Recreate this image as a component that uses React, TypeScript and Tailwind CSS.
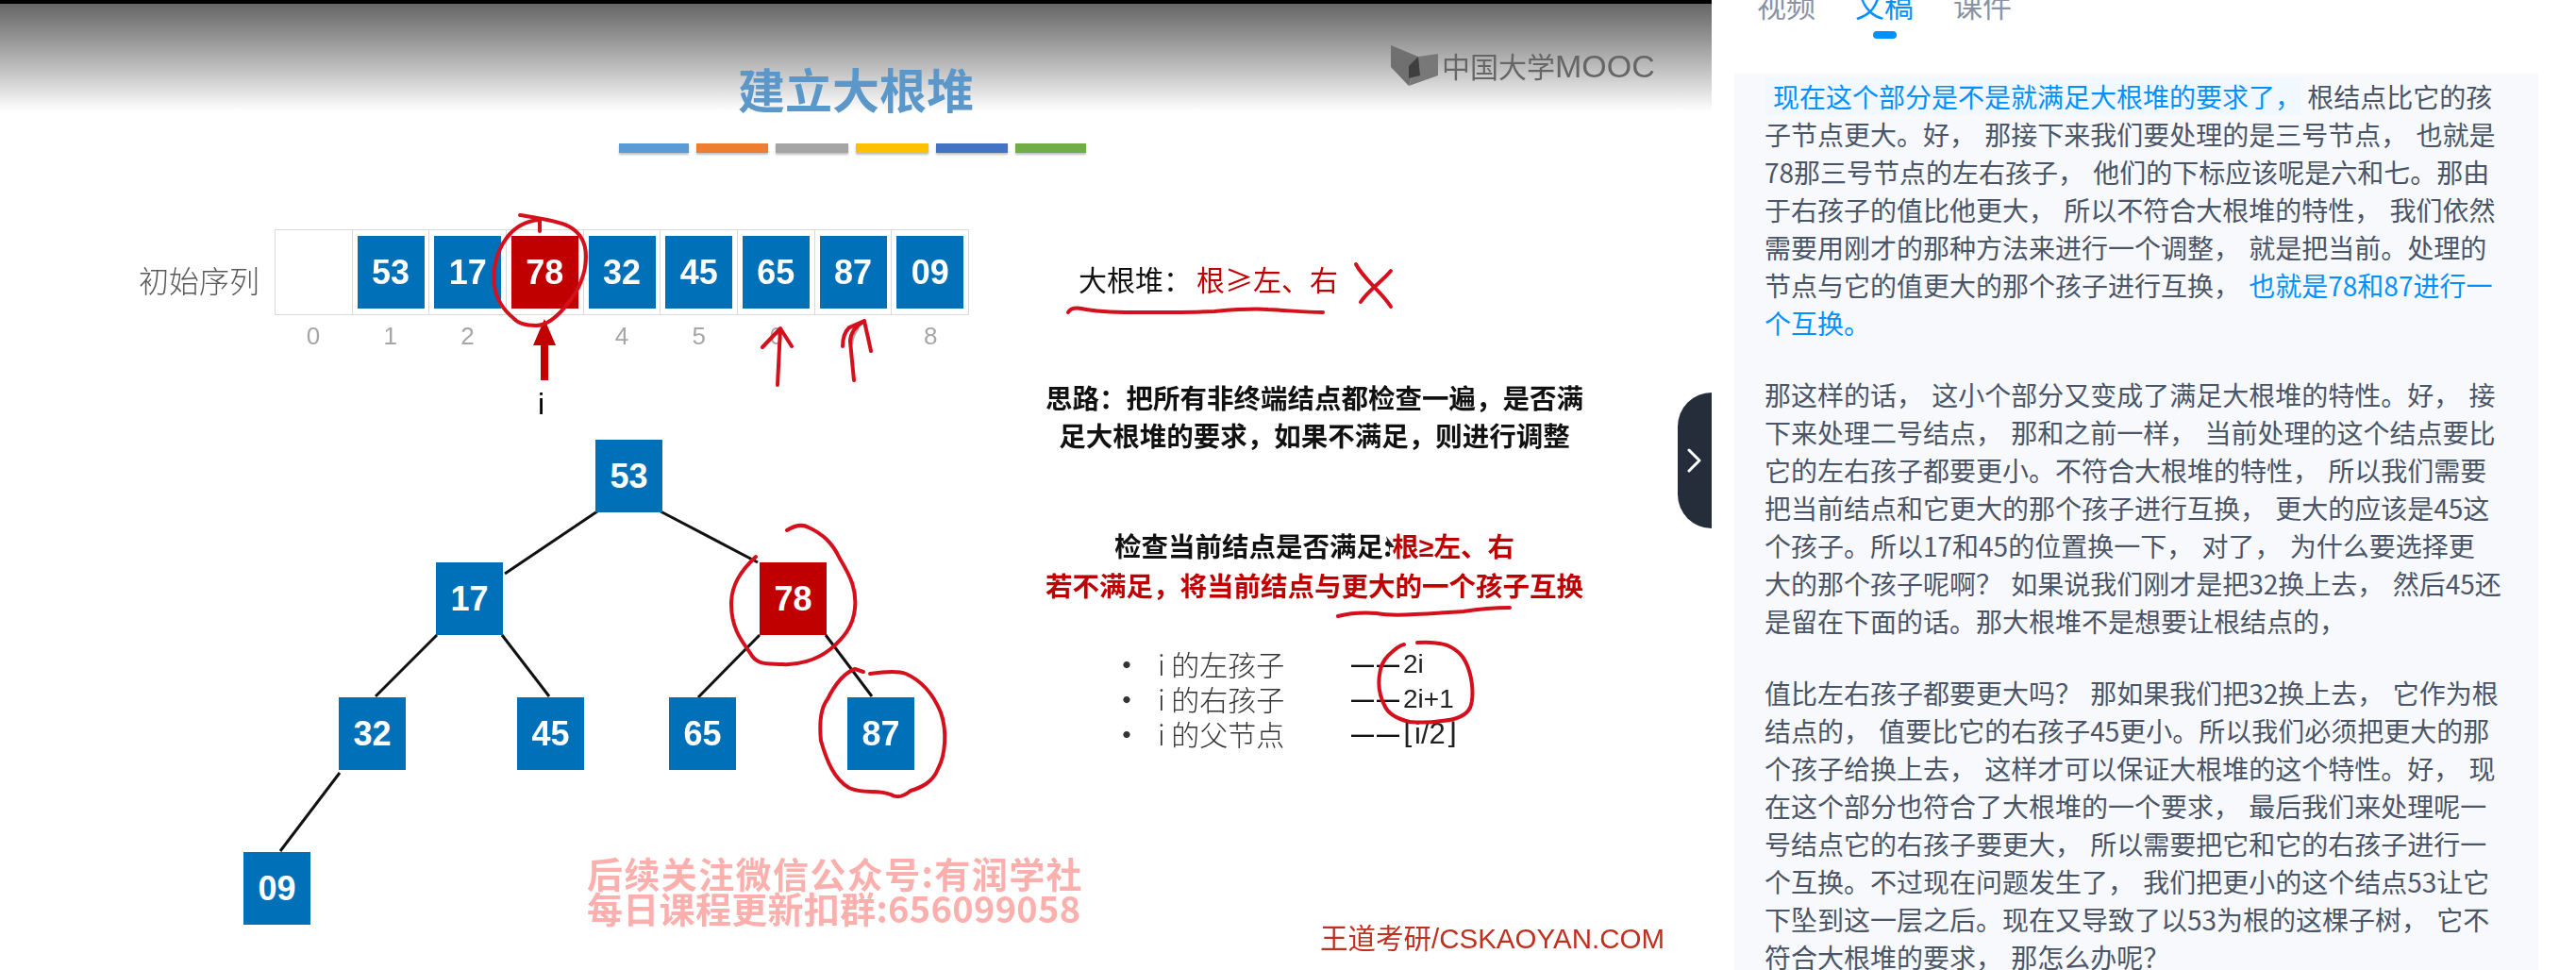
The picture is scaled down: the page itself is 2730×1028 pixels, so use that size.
const CJK = `font-['Noto_Sans_CJK_SC',sans-serif]`;

const F = (s: string) => s.replace(/,/g, "\uFF0C").replace(/\?/g, "\uFF1F").replace(/:/g, "\uFF1A");

function ArrBox({ v, red }: { v: string; red?: boolean }) {
  return (
    <div className="flex-1 border-l border-[#d9d9d9] first:border-l-0 flex items-center justify-center">
      {v ? (
        <div className={`w-[71px] h-[77px] flex items-center justify-center text-white text-[36px] font-bold font-['Liberation_Sans',sans-serif] ${red ? "bg-[#c00000]" : "bg-[#0070b8]"}`}>
          {v}
        </div>
      ) : null}
    </div>
  );
}

const nodes = [
  { v: "53", x: 631, y: 466 },
  { v: "17", x: 462, y: 596 },
  { v: "78", x: 805, y: 596, red: true },
  { v: "32", x: 359, y: 739 },
  { v: "45", x: 548, y: 739 },
  { v: "65", x: 709, y: 739 },
  { v: "87", x: 898, y: 739 },
  { v: "09", x: 258, y: 903 },
];

const edges = [
  [633, 542, 535, 608],
  [700, 542, 803, 596],
  [463, 673, 398, 738],
  [532, 673, 582, 738],
  [805, 673, 740, 739],
  [875, 673, 924, 738],
  [360, 819, 297, 902],
];

const strokes = [
  "M551 228C570 231 592 234 603 240C616 247 621 258 621 272C621 290 613 308 603 320C594 332 582 345 568 345C556 345 548 342 544 337C533 328 526 316 524 303C522 288 525 268 537 252C546 240 558 234 572 233M572 233L572 245",
  "M824 408L827 348M808 368L827 348L839 367",
  "M905 403L901 362C901 352 908 345 916 340M893 367C893 358 895 352 900 347L916 340C918 350 921 362 923 372",
  "M834 562C842 557 850 555 857 559C872 566 882 575 890 592C902 612 908 625 906 645C904 665 893 677 880 688C865 700 845 705 829 704C812 703 802 705 795 692C785 678 775 665 775 640C775 620 785 605 801 590",
  "M922 714C935 712 950 710 960 714C978 722 990 738 997 755C1004 775 1002 800 994 815C988 830 975 835 965 838C958 844 950 846 944 842C930 836 915 842 900 835C884 826 876 806 870 785C868 765 870 750 877 741C885 725 895 713 906 709L915 712",
  "M1132 331C1135 326 1140 326 1146 327C1165 331 1185 331 1201 331C1230 331 1260 331 1287 330C1310 328 1330 327 1344 328C1365 329 1385 331 1402 331",
  "M1437 280C1445 296 1465 310 1474 325M1474 287C1465 298 1450 308 1442 320",
  "M1418 653C1430 650 1445 649 1459 650C1470 652 1485 652 1499 651C1520 650 1535 649 1551 648C1570 645 1585 644 1600 644",
  "M1502 681C1515 680 1525 681 1534 684C1547 690 1552 697 1556 708C1561 722 1562 740 1558 750C1553 760 1541 763 1528 764C1515 766 1505 766 1494 765C1481 762 1472 757 1468 749C1462 738 1460 728 1462 715C1463 706 1466 700 1471 695C1476 690 1482 684 1488 683",
];

const bars = ["bg-[#5b9bd5] w-[74px]", "bg-[#ed7d31] w-[76px]", "bg-[#a5a5a5] w-[77px]", "bg-[#ffc000] w-[77px]", "bg-[#4472c4] w-[76px]", "bg-[#70ad47] w-[75px]"];

function Line({ text, blue, tail }: { text: string; blue?: boolean; tail?: string }) {
  return (
    <div className={`h-10 leading-10 whitespace-pre [word-spacing:3px] ${blue ? "text-[#0091ff]" : ""}`}>
      {F(text)}
      {tail ? <span className="text-[#0091ff]">{tail}</span> : null}
    </div>
  );
}

const listRows = [
  ["i 的左孩子", "2i"],
  ["i 的右孩子", "2i+1"],
  ["i 的父节点", "⌊i/2⌋"],
];

const para2 = [
  "那这样的话, 这小个部分又变成了满足大根堆的特性。好, 接",
  "下来处理二号结点, 那和之前一样, 当前处理的这个结点要比",
  "它的左右孩子都要更小。不符合大根堆的特性, 所以我们需要",
  "把当前结点和它更大的那个孩子进行互换, 更大的应该是45这",
  "个孩子。所以17和45的位置换一下, 对了, 为什么要选择更",
  "大的那个孩子呢啊? 如果说我们刚才是把32换上去, 然后45还",
  "是留在下面的话。那大根堆不是想要让根结点的,",
];

const para3 = [
  "值比左右孩子都要更大吗? 那如果我们把32换上去, 它作为根",
  "结点的, 值要比它的右孩子45更小。所以我们必须把更大的那",
  "个孩子给换上去, 这样才可以保证大根堆的这个特性。好, 现",
  "在这个部分也符合了大根堆的一个要求, 最后我们来处理呢一",
  "号结点它的右孩子要更大, 所以需要把它和它的右孩子进行一",
  "个互换。不过现在问题发生了, 我们把更小的这个结点53让它",
  "下坠到这一层之后。现在又导致了以53为根的这棵子树, 它不",
  "符合大根堆的要求, 那怎么办呢?",
];

export default function App() {
  return (
    <div className={`w-[2730px] h-[1028px] overflow-hidden flex bg-white ${CJK}`}>
      <div className="relative w-[1814px] h-[1028px] shrink-0 bg-white">
        <div className="blur-[0.7px] relative h-full flex flex-col">
          <div className="h-[118px] shrink-0 border-t-4 border-black bg-gradient-to-b from-[#666666] to-[#ffffff] flex items-start">
            <div className="ml-[782px] mt-[57px] w-[250px] text-center text-[50px] leading-[64px] font-bold text-[#5b97c9] whitespace-nowrap">建立大根堆</div>
            <div className="ml-[442px] mt-[43px] flex items-center gap-[2px]">
              <svg width="52" height="44" viewBox="0 0 52 44">
                <path d="M0 0L29 12L19 43L0 23Z" fill="#707070" />
                <path d="M29 12L50 9V32L19 43Z" fill="#787878" />
                <path d="M29 12L19 22V35L31 32Z" fill="#3f3f3f" />
              </svg>
              <div className="leading-[44px] text-[30px] text-[#666666] whitespace-nowrap">
                中国大学<span className="font-['Liberation_Sans',sans-serif] text-[34px]">MOOC</span>
              </div>
            </div>
          </div>

          <div className="ml-[656px] mt-[34px] flex gap-[8px]">
            {bars.map((b, i) => (
              <div key={i} className={`h-[10px] shadow-[0_2px_2px_rgba(0,0,0,0.25)] ${b}`} />
            ))}
          </div>

          <div className="mt-[81px] flex items-start">
            <div className="w-[1093px] shrink-0">
              <div className="flex items-start">
                <div className="ml-[147px] w-[144px] mt-[33px] text-[32px] leading-[40px] text-[#595959] font-light whitespace-nowrap">初始序列</div>
                <div className="w-[736px] h-[91px] border border-[#d9d9d9] flex">
                  {["", "53", "17", "78", "32", "45", "65", "87", "09"].map((v, i) => (
                    <ArrBox key={i} v={v} red={v === "78"} />
                  ))}
                </div>
              </div>
              <div className="ml-[291px] mt-[4px] w-[736px] flex text-[26px] leading-[36px] text-[#a6a6a6] font-['Liberation_Sans',sans-serif]">
                {["0", "1", "2", "", "4", "5", "6", "7", "8"].map((v, i) => (
                  <div key={i} className="flex-1 text-center">{v}</div>
                ))}
              </div>
              <div className="ml-[570px] mt-[34px] text-[32px] leading-[40px] text-black font-['Liberation_Sans',sans-serif]">i</div>
            </div>

            <div className="w-[600px] shrink-0">
              <div className="mt-[32px] pl-[50px] h-10 text-[30px] leading-[40px] text-[#111111] whitespace-nowrap">
                {F("大根堆:")}<span className="text-[#c00000] ml-[5px]">根≥左、右</span>
              </div>
              <div className="mt-[86px] text-center text-[28.5px] leading-[40px] font-bold text-[#111111]">
                <div>{F("思路:把所有非终端结点都检查一遍,是否满")}</div>
                <div>{F("足大根堆的要求,如果不满足,则进行调整")}</div>
              </div>
              <div className="mt-[77px] text-center text-[28.5px] leading-[40px] font-bold text-[#111111]">
                <div>检查当前结点是否满足:<span className="text-[#c00000]">根<span className="font-['Liberation_Sans',sans-serif]">≥</span>左、右</span></div>
                <div className="text-[#c00000]">{F("若不满足,将当前结点与更大的一个孩子互换")}</div>
              </div>
              <div className="mt-[45px] pl-[84px] text-[30px] leading-[37px] text-[#333333] font-light">
                {listRows.map((r, i) => (
                  <div key={i} className="flex items-center whitespace-nowrap">
                    <span className="w-[50px] text-[34px] leading-[37px] font-normal">•</span>
                    <span className="w-[205px]">{r[0]}</span>
                    <span className="w-[55px] font-['Liberation_Sans',sans-serif] text-[#111111] text-[24px] tracking-[3px] font-bold">——</span>
                    <span className={`font-['Liberation_Sans',sans-serif] text-[#222222] ${i === 2 ? "text-[31px]" : "text-[28px]"}`}>{r[1]}</span>
                  </div>
                ))}
              </div>
            </div>
          </div>

          <svg className="absolute left-0 top-0" width="1814" height="1028" viewBox="0 0 1814 1028" fill="none">
            {edges.map((e, i) => (
              <line key={i} x1={e[0]} y1={e[1]} x2={e[2]} y2={e[3]} stroke="#111111" strokeWidth="3" />
            ))}
            <path d="M577 338L589 366H581V403H573V366H565Z" fill="#c00000" />
            <path d="M1469 568L1478 580L1473 580L1473 586Z" fill="#222222" />
          </svg>

          {nodes.map((n) => (
            <div
              key={n.v}
              className={`absolute w-[71px] h-[77px] flex items-center justify-center text-white text-[36px] font-bold font-['Liberation_Sans',sans-serif] ${n.red ? "bg-[#c00000]" : "bg-[#0070b8]"}`}
              style={{ left: n.x, top: n.y }}
            >
              {n.v}
            </div>
          ))}

          <div className="absolute left-[622px] top-[906px] text-[38px] leading-[37px] font-bold text-[#fbb0ae] whitespace-nowrap">
            <div className="tracking-[1.4px]">后续关注微信公众号:有润学社</div>
            <div className="tracking-[0.3px]">每日课程更新扣群:656099058</div>
          </div>

          <div className="absolute left-[1399px] top-[972px] text-[29.5px] leading-[40px] text-[#c0301f] whitespace-nowrap">
            王道考研<span className="font-['Liberation_Sans',sans-serif]">/CSKAOYAN.COM</span>
          </div>

          <svg className="absolute left-0 top-0" width="1814" height="1028" viewBox="0 0 1814 1028" fill="none">
            {strokes.map((d, i) => (
              <path key={i} d={d} stroke="#d4101c" strokeWidth="4" strokeLinecap="round" strokeLinejoin="round" />
            ))}
          </svg>
        </div>

        <div className="absolute right-0 top-[416px] w-[36px] h-[144px] bg-[#252d3b] rounded-l-[36px] flex items-center justify-center">
          <svg width="16" height="26" viewBox="0 0 16 26" fill="none">
            <path d="M2 2L13 13L2 24" stroke="#ffffff" strokeWidth="3" strokeLinecap="round" strokeLinejoin="round" />
          </svg>
        </div>
      </div>

      <div className="flex-1 min-w-0 flex flex-col">
        <div className="flex gap-[42px] pl-[48px] -mt-[15px] text-[31px] leading-[40px] text-[#8a93a3]">
          <span>视频</span>
          <span className="relative text-[#0091ff]">
            文稿
            <span className="absolute left-[19px] top-[48px] w-[25px] h-[8px] rounded-full bg-[#0091ff]" />
          </span>
          <span>课件</span>
        </div>
        <div className="mt-[53px] ml-[24px] w-[852px] flex-1 bg-[#f7f9fd] pl-[32px] pt-[4px] text-[28px] text-[#4a5568]">
          <div className="whitespace-pre h-10 leading-10">
            <span className="inline-block h-10 pl-[9px] bg-[#f1f8ff] text-[#0091ff]">{F("现在这个部分是不是就满足大根堆的要求了,")}</span> 根结点比它的孩
          </div>
          <Line text="子节点更大。好, 那接下来我们要处理的是三号节点, 也就是" />
          <Line text="78那三号节点的左右孩子, 他们的下标应该呢是六和七。那由" />
          <Line text="于右孩子的值比他更大, 所以不符合大根堆的特性, 我们依然" />
          <Line text="需要用刚才的那种方法来进行一个调整, 就是把当前。处理的" />
          <Line text="节点与它的值更大的那个孩子进行互换, " tail="也就是78和87进行一" />
          <Line text="个互换。" blue />
          <div className="mt-[36px]">
            {para2.map((l) => (
              <Line key={l} text={l} />
            ))}
          </div>
          <div className="mt-[36px]">
            {para3.map((l) => (
              <Line key={l} text={l} />
            ))}
          </div>
        </div>
      </div>
    </div>
  );
}
